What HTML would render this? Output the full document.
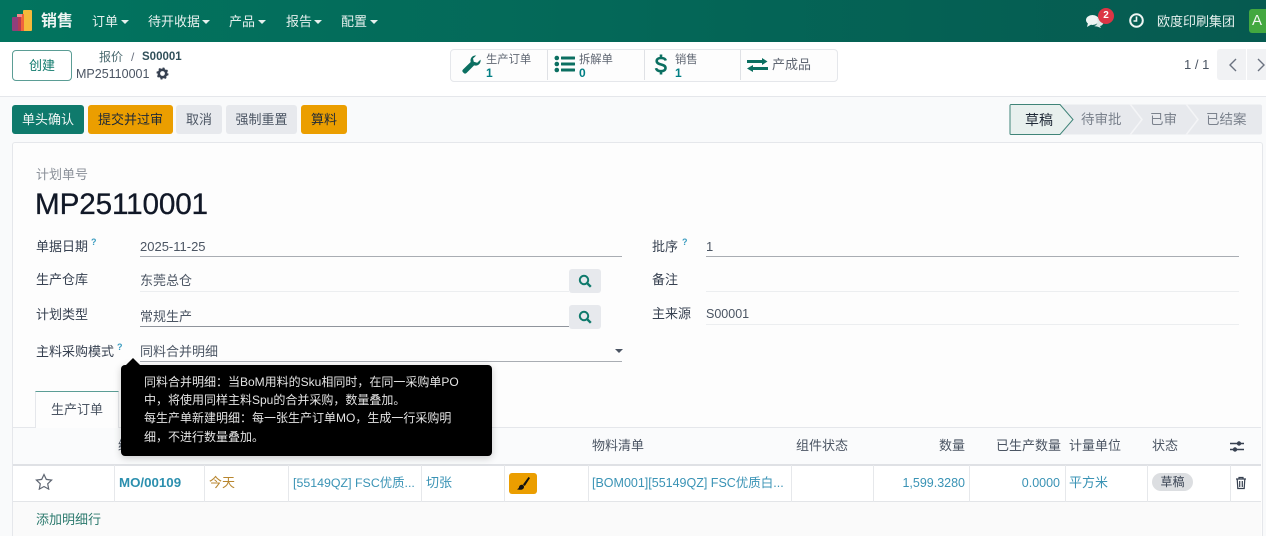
<!DOCTYPE html>
<html lang="zh"><head><meta charset="utf-8"><title>销售</title>
<style>
html,body{margin:0;padding:0;width:1266px;height:536px;overflow:hidden}
#w{position:relative;width:1266px;height:536px;overflow:hidden;background:#f9fafb;font-family:"Liberation Sans","Noto Sans CJK SC",sans-serif;font-size:13px;color:#374151}
.a{position:absolute;white-space:nowrap}
.t{position:absolute;white-space:nowrap;line-height:18px;height:18px}
.nav{left:0;top:0;width:1266px;height:42px;background:linear-gradient(90deg,#02745f,#065a50)}
.n{color:#e6f0ee;font-size:13px}
.c{width:0;height:0;border-left:4px solid transparent;border-right:4px solid transparent;border-top:4px solid #e6f0ee;position:absolute}
.btn{position:absolute;top:105px;height:29px;line-height:29px;text-align:center;border-radius:3px;font-size:13px}
.gr{background:#e7e9ed;color:#4b5563}
.or{background:#eb9e00;color:#1f2937}
.lab{color:#374151}
.val{color:#4b5563}
.line{position:absolute;height:1px}
.q{position:absolute;font-size:9px;color:#3b9cc0;line-height:10px;font-weight:bold}
.sb{position:absolute;top:68px;color:#017e84;font-size:12px;line-height:10px;font-weight:bold}
.s{position:absolute;width:32px;height:24px;background:#e7e9ed;border-radius:3px}
.vb{position:absolute;width:1px;top:465px;height:37px;background:#e6e8eb}
.th{position:absolute;top:437px;line-height:18px;color:#4b5563;font-size:13px;white-space:nowrap}
.td{position:absolute;top:474px;line-height:18px;color:#3a93b5;font-size:13px;white-space:nowrap}
.ps{position:absolute;top:105px;height:30px;line-height:30px;color:#7b828d;font-size:13.500px}
.tip{position:absolute;left:144px;white-space:nowrap;line-height:18px;height:18px;color:#e4e4e4;font-size:12px}
</style></head><body><div id="w">

<div class="a nav"></div>
<svg class="a" style="left:11px;top:9px" width="23" height="23" viewBox="0 0 23 23">
<rect x="12" y="1" width="9" height="21" rx="1" fill="#f6b93b"/>
<rect x="6" y="5" width="7" height="17" fill="#f0643c"/>
<rect x="6" y="5" width="5" height="3" fill="#f08a8a"/>
<rect x="1" y="8" width="7" height="14" rx="1" fill="#8f3f7b"/>
<rect x="7" y="8" width="3" height="14" fill="#b53a55"/>
</svg>
<div class="t" style="left:41px;top:13px;font-size:16px;color:#eef5f3;font-weight:bold">销售</div>
<div class="t n" style="left:92px;top:13px">订单</div><div class="c" style="left:121px;top:20px"></div>
<div class="t n" style="left:148px;top:13px">待开收据</div><div class="c" style="left:202px;top:20px"></div>
<div class="t n" style="left:229px;top:13px">产品</div><div class="c" style="left:258px;top:20px"></div>
<div class="t n" style="left:286px;top:13px">报告</div><div class="c" style="left:314px;top:20px"></div>
<div class="t n" style="left:341px;top:13px">配置</div><div class="c" style="left:370px;top:20px"></div>

<svg class="a" style="left:1085px;top:13px" width="20" height="16" viewBox="0 0 20 16">
<ellipse cx="7.500" cy="7" rx="6.500" ry="5" fill="#eef5f3"/><path d="M3 10 L2 14 L7 11Z" fill="#eef5f3"/>
<path d="M12 5a5 4 0 0 1 3 8l1 2-4-1.500a6 4 0 0 1-3-.5c3-.5 4.500-3.500 3-8z" fill="#dce9e6"/>
</svg>
<div class="a" style="left:1098px;top:8px;width:16px;height:16px;border-radius:8px;background:#dc3545;color:#fff;font-size:10px;font-weight:bold;line-height:16px;text-align:center">2</div>
<svg class="a" style="left:1128px;top:12px" width="17" height="17" viewBox="0 0 17 17"><circle cx="8.500" cy="8.500" r="6.300" fill="none" stroke="#eef5f3" stroke-width="2"/><path d="M8.500 4.500V9H5.500" fill="none" stroke="#eef5f3" stroke-width="1.600"/></svg>
<div class="t n" style="left:1157px;top:13px">欧度印刷集团</div>
<div class="a" style="left:1249px;top:9px;width:17px;height:24px;background:#43a83f;border-radius:3px 0 0 3px;color:#f2f7f2;font-size:15px;line-height:24px;text-indent:3px;overflow:hidden">A</div>

<div class="a" style="left:0;top:42px;width:1266px;height:54px;background:#fff"></div>
<div class="a" style="left:0;top:96px;width:1266px;height:1px;background:#e5e7eb"></div>

<div class="a" style="left:12px;top:50px;width:58px;height:29px;border:1px solid #5b9d95;border-radius:4px;color:#0f7a6c;text-align:center;line-height:29px;background:#fff">创建</div>
<div class="t" style="left:99px;top:48px;font-size:12px;color:#4b6a70">报价</div>
<div class="t" style="left:131px;top:48px;font-size:12px;color:#6b7280">/</div>
<div class="t" style="left:142px;top:48px;font-size:11.500px;color:#31505a;font-weight:bold">S00001</div>
<div class="t" style="left:76px;top:65px;font-size:12.500px;color:#4b5563">MP25110001</div>
<svg class="a" style="left:156px;top:67px" width="13" height="13" viewBox="0 0 13 13"><circle cx="6.500" cy="6.500" r="3.700" fill="none" stroke="#374151" stroke-width="2.600"/><circle cx="6.500" cy="6.500" r="5.200" fill="none" stroke="#374151" stroke-width="1.700" stroke-dasharray="2 2.080"/></svg>

<div class="a" style="left:450px;top:49px;width:386px;height:31px;border:1px solid #e5e7eb;border-radius:4px;background:#fdfdfd"></div>
<div class="a" style="left:547px;top:50px;width:1px;height:30px;background:#dfe1e5"></div>
<div class="a" style="left:644px;top:50px;width:1px;height:30px;background:#dfe1e5"></div>
<div class="a" style="left:740px;top:50px;width:1px;height:30px;background:#dfe1e5"></div>

<svg class="a" style="left:461px;top:54px" width="21" height="20" viewBox="0 0 21 20"><path d="M14.500 1.500a5 5 0 0 0-4.800 6.500L2 15.500a2 2 0 0 0 0 2.800l.7.7a2 2 0 0 0 2.800 0l7.600-7.600a5 5 0 0 0 6.400-5.800l-3.300 3.100-3.400-1-.8-3.200 3.200-3z" fill="#0b6f61"/></svg>
<div class="t" style="left:486px;top:51px;font-size:11.300px;color:#5f6672">生产订单</div>
<div class="sb" style="left:486px">1</div>

<svg class="a" style="left:554px;top:55px" width="21" height="18" viewBox="0 0 21 18"><g fill="#0b6f61"><circle cx="2.800" cy="3" r="2.300"/><circle cx="2.800" cy="9" r="2.300"/><circle cx="2.800" cy="15" r="2.300"/><rect x="7" y="1.500" width="14" height="3" rx=".5"/><rect x="7" y="7.500" width="14" height="3" rx=".5"/><rect x="7" y="13.500" width="14" height="3" rx=".5"/></g></svg>
<div class="t" style="left:579px;top:51px;font-size:11.300px;color:#5f6672">拆解单</div>
<div class="sb" style="left:579px">0</div>

<svg class="a" style="left:654px;top:54px" width="14" height="21" viewBox="0 0 14 21"><path d="M11.800 6.500C11.300 4.700 9.500 4 7 4 4.500 4 2.700 5.200 2.700 7c0 4.500 8.800 2.500 8.800 7 0 2.200-2 3.200-4.500 3.200-2.600 0-4.500-1-5-3M7 .5V4M7 17v3.500" fill="none" stroke="#0b6f61" stroke-width="2.600"/></svg>
<div class="t" style="left:675px;top:51px;font-size:11.300px;color:#5f6672">销售</div>
<div class="sb" style="left:675px">1</div>

<svg class="a" style="left:747px;top:58px" width="21" height="14" viewBox="0 0 21 14"><path d="M0 2H15V0l5.500 3.500L15 7V5H0zM21 9H6V7L0 10.500 6 14v-2h15z" fill="#0b6f61"/></svg>
<div class="t" style="left:772px;top:56px;font-size:13px;color:#5f6672">产成品</div>

<div class="t" style="left:1184px;top:56px;font-size:13px;color:#4b5563">1 / 1</div>
<div class="a" style="left:1217px;top:49px;width:29px;height:31px;background:#f1f2f4;border-radius:3px 0 0 3px"></div>
<div class="a" style="left:1247px;top:49px;width:19px;height:31px;background:#f1f2f4"></div>
<svg class="a" style="left:1225px;top:57px" width="41" height="16" viewBox="0 0 41 16"><path d="M11 2 5 8l6 6M33 2l6 6-6 6" fill="none" stroke="#6b7280" stroke-width="1.400"/></svg>

<div class="btn" style="left:12px;width:72px;background:#0f7a6c;color:#f2f7f6">单头确认</div>
<div class="btn or" style="left:88px;width:85px">提交并过审</div>
<div class="btn gr" style="left:176px;width:46px">取消</div>
<div class="btn gr" style="left:226px;width:71px">强制重置</div>
<div class="btn or" style="left:301px;width:46px">算料</div>

<svg class="a" style="left:1009px;top:104px" width="254" height="31" viewBox="0 0 254 31">
<rect x="1" y="0.500" width="252" height="30" rx="2" fill="#e7e9ed"/>
<path d="M121 0 L133 15.500 L121 31 M177 0 L189 15.500 L177 31" fill="none" stroke="#f4f5f7" stroke-width="1.500"/>
<path d="M1 1.500a1 1 0 0 1 1-1H51L64 15.500 51 30.500H2a1 1 0 0 1-1-1z" fill="#e8f0ee" stroke="#3f8478" stroke-width="1"/>
</svg>
<div class="ps" style="left:1025px;color:#1f2937;font-size:14px">草稿</div>
<div class="ps" style="left:1081px">待审批</div>
<div class="ps" style="left:1150px">已审</div>
<div class="ps" style="left:1206px">已结案</div>

<div class="a" style="left:12px;top:142px;width:1249px;height:393px;background:#fdfdfd;border:1px solid #e5e7eb;border-bottom:0;border-radius:3px 3px 0 0"></div>

<div class="t" style="left:36px;top:166px;font-size:13px;color:#8a9099">计划单号</div>
<div class="t" style="left:35px;top:188px;font-size:29.700px;line-height:34px;height:34px;color:#111827;letter-spacing:-.15px;-webkit-text-stroke:.3px #111827">MP25110001</div>

<div class="t lab" style="left:36px;top:238px">单据日期</div><div class="q" style="left:91px;top:237px">?</div>
<div class="t val" style="left:140px;top:238px">2025-11-25</div>
<div class="line" style="left:140px;top:256px;width:482px;background:#a9adb3"></div>

<div class="t lab" style="left:36px;top:271px">生产仓库</div>
<div class="t val" style="left:140px;top:272px">东莞总仓</div>
<div class="line" style="left:140px;top:291px;width:429px;background:#eceef0"></div>
<div class="s" style="left:569px;top:269px"></div>
<svg class="a" style="left:578px;top:274px" width="14" height="14" viewBox="0 0 14 14"><circle cx="6" cy="6" r="4.200" fill="none" stroke="#0f7a6c" stroke-width="2"/><path d="M9 9l3.800 3.800" stroke="#0f7a6c" stroke-width="2.400"/></svg>

<div class="t lab" style="left:36px;top:306px">计划类型</div>
<div class="t val" style="left:140px;top:308px">常规生产</div>
<div class="line" style="left:140px;top:326px;width:429px;background:#8f949c"></div>
<div class="s" style="left:569px;top:305px"></div>
<svg class="a" style="left:578px;top:310px" width="14" height="14" viewBox="0 0 14 14"><circle cx="6" cy="6" r="4.200" fill="none" stroke="#0f7a6c" stroke-width="2"/><path d="M9 9l3.800 3.800" stroke="#0f7a6c" stroke-width="2.400"/></svg>

<div class="t lab" style="left:36px;top:343px">主料采购模式</div><div class="q" style="left:117px;top:342px">?</div>
<div class="t val" style="left:140px;top:343px">同料合并明细</div>
<div class="line" style="left:140px;top:361px;width:482px;background:#a9adb3"></div>
<div class="a" style="left:615px;top:349px;width:0;height:0;border-left:4px solid transparent;border-right:4px solid transparent;border-top:4px solid #4b5563"></div>

<div class="t lab" style="left:652px;top:238px">批序</div><div class="q" style="left:682px;top:237px">?</div>
<div class="t val" style="left:706px;top:238px">1</div>
<div class="line" style="left:706px;top:256px;width:533px;background:#a9adb3"></div>
<div class="t lab" style="left:652px;top:271px">备注</div>
<div class="line" style="left:706px;top:291px;width:533px;background:#eceef0"></div>
<div class="t lab" style="left:652px;top:305px">主来源</div>
<div class="t val" style="left:706px;top:305px;font-size:12.500px">S00001</div>
<div class="line" style="left:706px;top:324px;width:533px;background:#eceef0"></div>

<div class="a" style="left:13px;top:427px;width:1248px;height:1px;background:#e5e7eb"></div>
<div class="a" style="left:35px;top:391px;width:82px;height:36px;background:#fdfdfd;border:1px solid #e5e7eb;border-top:1px solid #5b9d95;border-bottom:0;color:#4b5563;text-align:center;line-height:36px">生产订单</div>

<div class="a" style="left:13px;top:428px;width:1248px;height:36px;background:#fafbfc"></div>
<div class="a" style="left:13px;top:464px;width:1248px;height:2px;background:#dfe1e5"></div>
<div class="a" style="left:13px;top:466px;width:1248px;height:36px;background:#fff"></div>
<div class="a" style="left:13px;top:501px;width:1248px;height:1px;background:#e3e5e8"></div>
<div class="a" style="left:13px;top:502px;width:1248px;height:34px;background:#fafafa"></div>
<div class="vb" style="left:114px"></div><div class="vb" style="left:204px"></div><div class="vb" style="left:288px"></div><div class="vb" style="left:421px"></div><div class="vb" style="left:504px"></div><div class="vb" style="left:588px"></div><div class="vb" style="left:791px"></div><div class="vb" style="left:873px"></div><div class="vb" style="left:969px"></div><div class="vb" style="left:1065px"></div><div class="vb" style="left:1147px"></div><div class="vb" style="left:1230px"></div>

<div class="th" style="left:118px">编号</div>
<div class="th" style="left:592px">物料清单</div>
<div class="th" style="left:796px">组件状态</div>
<div class="th" style="left:939px">数量</div>
<div class="th" style="left:996px">已生产数量</div>
<div class="th" style="left:1069px">计量单位</div>
<div class="th" style="left:1152px">状态</div>
<svg class="a" style="left:1230px;top:440px" width="14" height="13" viewBox="0 0 14 13"><path d="M0 3.500h14M0 9.500h14" stroke="#374151" stroke-width="1.500"/><circle cx="9" cy="3.500" r="2.200" fill="#374151"/><circle cx="5" cy="9.500" r="2.200" fill="#374151"/></svg>

<svg class="a" style="left:35px;top:473px" width="18" height="17" viewBox="0 0 18 17"><path d="M9 1.500l2.300 4.900 5.300.7-3.900 3.700 1 5.300L9 13.500l-4.700 2.600 1-5.300L1.400 7.100l5.300-.7z" fill="none" stroke="#5f6672" stroke-width="1.200"/></svg>
<div class="td" style="left:119px;font-weight:bold;color:#2b8fae;font-size:13.300px">MO/00109</div>
<div class="td" style="left:209px;color:#b8862f">今天</div>
<div class="td" style="left:293px;font-size:12.400px">[55149QZ] FSC优质...</div>
<div class="td" style="left:426px">切张</div>
<div class="a" style="left:509px;top:473px;width:28px;height:21px;background:#eb9e00;border-radius:3px"></div>
<svg class="a" style="left:516px;top:476px" width="15" height="15" viewBox="0 0 15 15"><path d="M12.500 1 L7 8.500 L8.800 10 L14 2z" fill="#111"/><path d="M6.500 8.800c-2-.5-3.300 1-3.500 2.400-.1.800-1 1.500-2 2 2.500 1 6.500 1 7-2 .2-1-.5-2-1.500-2.400z" fill="#111"/></svg>
<div class="td" style="left:592px;font-size:12.500px">[BOM001][55149QZ] FSC优质白...</div>
<div class="td" style="right:301px;font-size:12.500px">1,599.3280</div>
<div class="td" style="right:206px;font-size:12.500px">0.0000</div>
<div class="td" style="left:1069px">平方米</div>
<div class="a" style="left:1152px;top:473px;width:41px;height:18px;background:#dcdee1;border-radius:9px;color:#374151;font-size:12px;line-height:18px;text-align:center">草稿</div>
<svg class="a" style="left:1235px;top:476px" width="12" height="14" viewBox="0 0 12 14"><path d="M1 3h10M4 3V1.500h4V3M2.200 3l.6 9.500h6.400L9.800 3M4.700 5v6M7.300 5v6" fill="none" stroke="#374151" stroke-width="1.200"/></svg>

<div class="t" style="left:36px;top:511px;color:#2c7a6e">添加明细行</div>

<div class="a" style="left:121px;top:365px;width:371px;height:91px;background:#000;border-radius:4px;box-shadow:0 2px 8px rgba(0,0,0,.2)"></div>
<div class="a" style="left:125px;top:358px;width:0;height:0;border-left:8px solid transparent;border-right:8px solid transparent;border-bottom:8px solid #000"></div>
<div class="tip" style="top:373px">同料合并明细：当BoM用料的Sku相同时，在同一采购单PO</div>
<div class="tip" style="top:391px">中，将使用同样主料Spu的合并采购，数量叠加。</div>
<div class="tip" style="top:409px">每生产单新建明细：每一张生产订单MO，生成一行采购明</div>
<div class="tip" style="top:428px">细，不进行数量叠加。</div>

</div></body></html>
